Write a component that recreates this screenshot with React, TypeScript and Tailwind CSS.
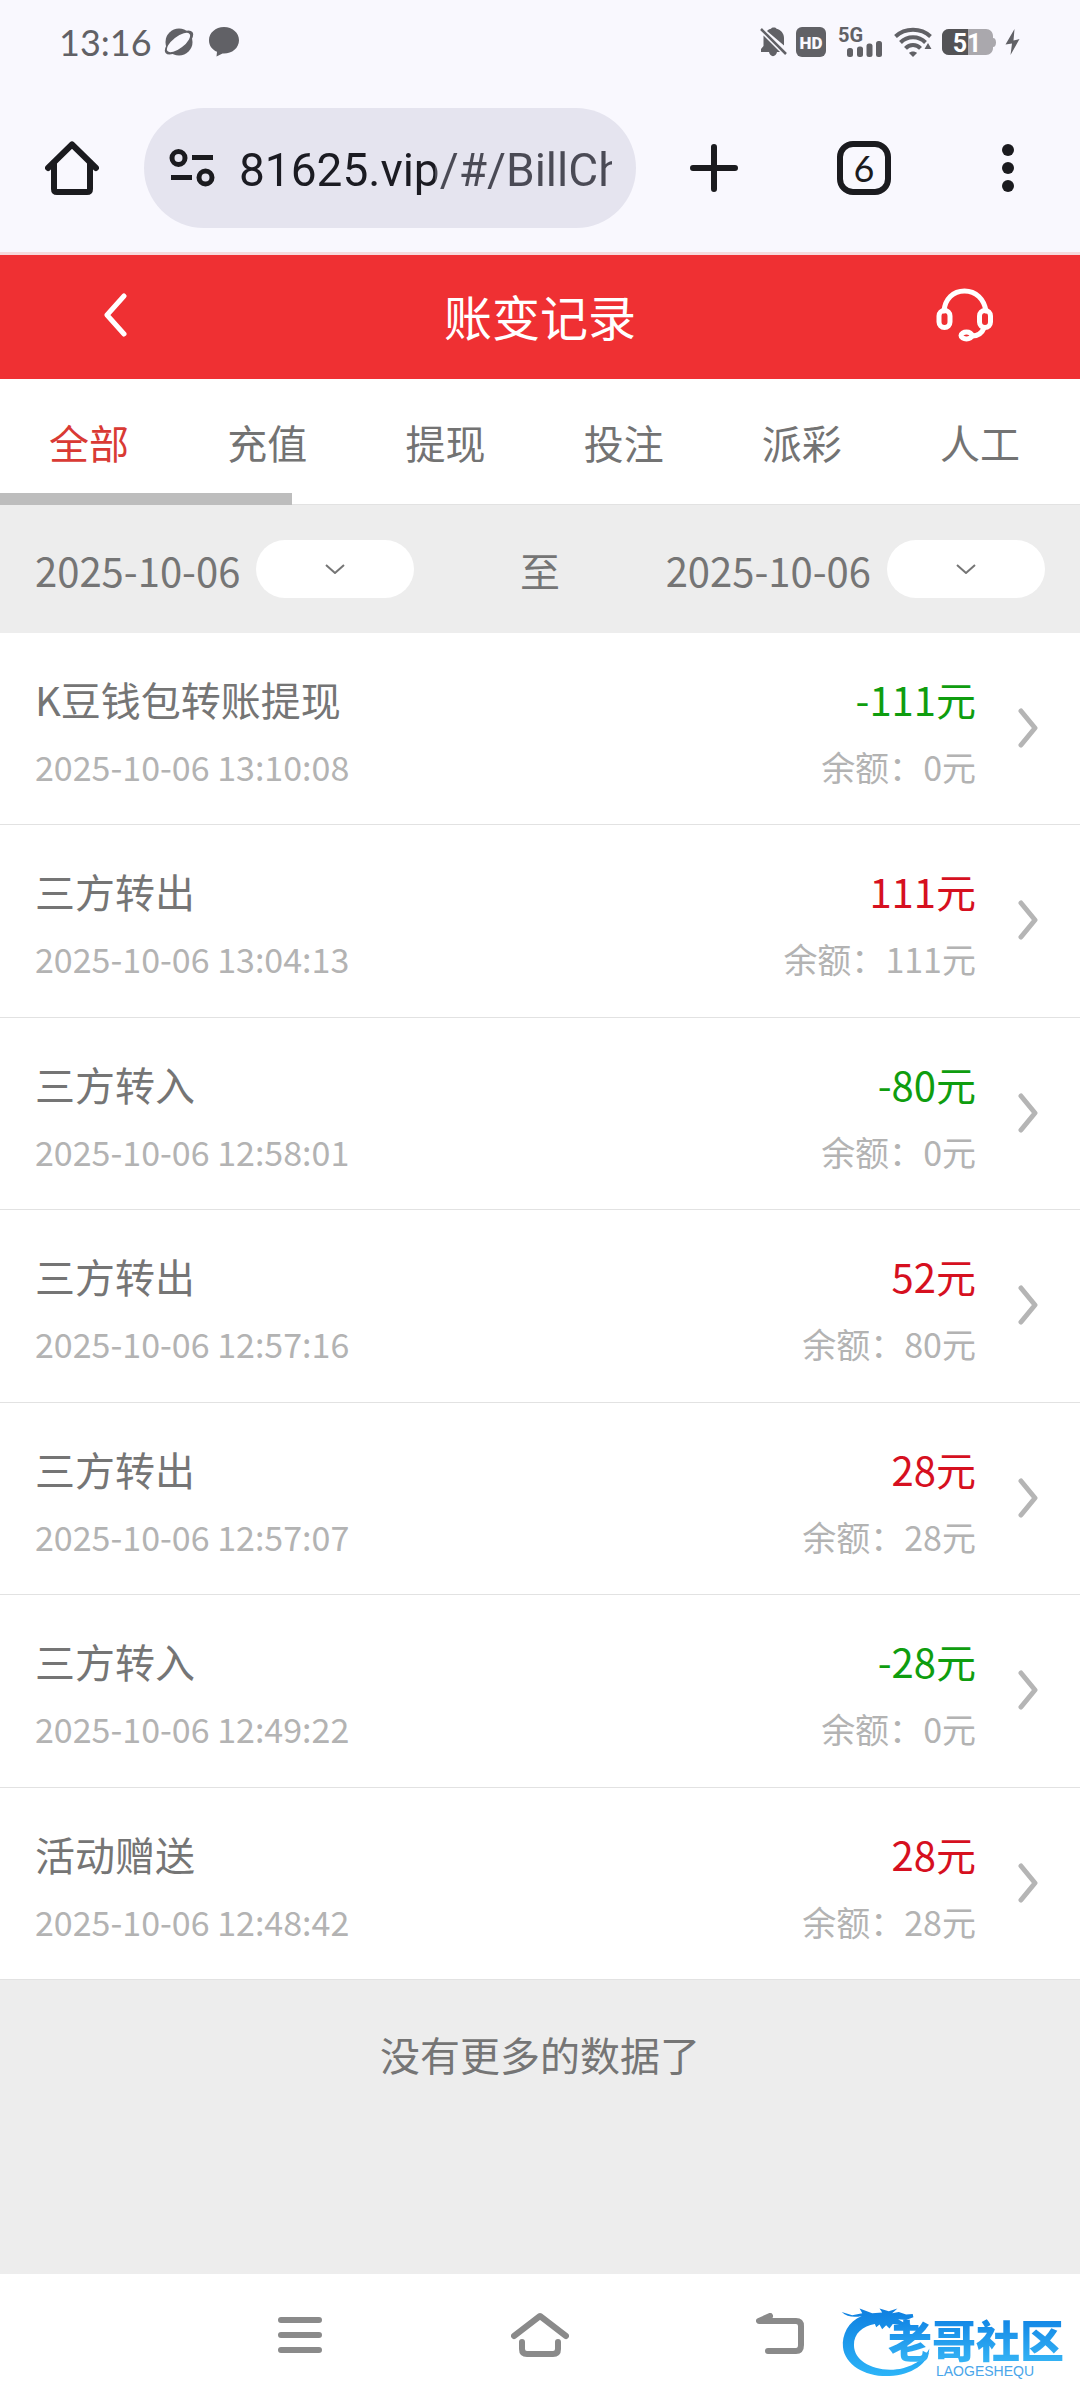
import React from "react";

type Entry = {
  title: string;
  time: string;
  amount: string;
  balance: string;
};

const tabs = ["全部", "充值", "提现", "投注", "派彩", "人工"];

const entries: Entry[] = [
  { title: "K豆钱包转账提现", time: "2025-10-06 13:10:08", amount: "-111", balance: "0" },
  { title: "三方转出", time: "2025-10-06 13:04:13", amount: "111", balance: "111" },
  { title: "三方转入", time: "2025-10-06 12:58:01", amount: "-80", balance: "0" },
  { title: "三方转出", time: "2025-10-06 12:57:16", amount: "52", balance: "80" },
  { title: "三方转出", time: "2025-10-06 12:57:07", amount: "28", balance: "28" },
  { title: "三方转入", time: "2025-10-06 12:49:22", amount: "-28", balance: "0" },
  { title: "活动赠送", time: "2025-10-06 12:48:42", amount: "28", balance: "28" },
];

function StatusBar() {
  return (
    <div className="flex h-[84px] items-center justify-between pr-[60px] pl-[59px] text-[#616166]">
      <div className="flex items-center">
        <span className="font-['Lato',sans-serif] text-[36px] leading-[44px]">13:16</span>
        <svg className="ml-3 h-[30px] w-[30px]" viewBox="0 0 30 30" aria-hidden="true">
          <circle cx="15" cy="15" r="13.500" fill="currentColor" />
          <ellipse cx="15" cy="15.500" rx="17" ry="7.500" transform="rotate(-38 15 15.500)" fill="currentColor" />
          <ellipse cx="14.500" cy="15.500" rx="14" ry="5.800" transform="rotate(-38 14.500 15.500)" fill="#f9f8fe" />
        </svg>
        <svg className="ml-[15px] h-[30px] w-[30px]" viewBox="0 0 30 30" aria-hidden="true">
          <path d="M15 0C23.500 0 30 6 30 13.200C30 21 23 26.500 15 26.500L13.500 26.500L7.500 29.500L8 24.800C3 22.500 0 18.500 0 13.200C0 6 6.500 0 15 0Z" fill="currentColor" />
        </svg>
      </div>
      <div className="flex items-center">
        <svg className="h-[30px] w-[28px]" viewBox="0 0 28 30" aria-hidden="true">
          <path d="M7 4C8.500 2.500 10 2 11 1.800C11.500 0 16 0 16.500 1.800C21 3 24 6.500 24 11V18.500ZM3.500 8.500L20 25H17C16 30.500 10 30.500 9 25H1V22L3.500 19Z" fill="currentColor" />
          <path d="M1 2L26 27" stroke="currentColor" strokeWidth="2.500" />
        </svg>
        <svg className="ml-2 h-[30px] w-[30px]" viewBox="0 0 30 30" aria-hidden="true">
          <rect width="30" height="30" rx="6" fill="currentColor" />
          <text x="15" y="21.500" textAnchor="middle" fill="#f9f8fe" fontFamily="Roboto, sans-serif" fontWeight="900" fontSize="17">HD</text>
        </svg>
        <svg className="ml-3 h-[30px] w-[45px] overflow-visible" viewBox="0 0 45 30" aria-hidden="true">
          <text x="0" y="15" fill="currentColor" fontFamily="Roboto, sans-serif" fontWeight="700" fontSize="20">5G</text>
          <rect x="9" y="21" width="6" height="9" rx="2.500" fill="currentColor" />
          <rect x="19" y="19.500" width="6" height="10.500" rx="2.500" fill="currentColor" />
          <rect x="28.500" y="16.500" width="6" height="13.500" rx="2.500" fill="currentColor" />
          <rect x="38" y="14" width="6" height="16" rx="2.500" fill="currentColor" />
        </svg>
        <svg className="ml-[11px] h-[30px] w-[38px]" viewBox="0 0 38 30" aria-hidden="true">
          <g fill="none" stroke="currentColor" strokeWidth="4">
            <path d="M1.500 9.500C11 0.500 27 0.500 36.500 9.500" />
            <path d="M6.500 15.500C13.500 8.500 24.500 8.500 31.500 15.500" />
            <path d="M11.500 21.300C15.500 17 22.500 17 26.500 21.300" />
          </g>
          <path d="M15 26C17 24 21 24 23 26L19 30Z M34 16L37.500 22H30.500Z" fill="currentColor" />
        </svg>
        <svg className="ml-[10px] h-[28px] w-[54px]" viewBox="0 0 54 28" aria-hidden="true">
          <path d="M7 1H44C48 1 51 4 51 8V10C53 10 54 12 54 14.500S53 19 51 19V20C51 24 48 27 44 27H7C3 27 0 24 0 20V8C0 4 3 1 7 1Z" fill="#aaa8ad" />
          <path d="M7 1H26V27H7C3 27 0 24 0 20V8C0 4 3 1 7 1Z" fill="#535356" />
          <text x="25" y="23.500" textAnchor="middle" fill="#fff" fontFamily="Roboto, sans-serif" fontWeight="700" fontSize="25">51</text>
        </svg>
        <svg className="ml-[9px] h-[28px] w-[15px]" viewBox="0 0 15 28" aria-hidden="true">
          <path d="M9.500 1L0.500 16.500L7 15.500L5.500 27L14.500 11L8.500 12.500Z" fill="currentColor" />
        </svg>
      </div>
    </div>
  );
}

function BrowserBar() {
  return (
    <div className="flex h-[171px] items-start border-b-[3px] border-[#f6d9dc] text-[#1b1b1f]">
      <button type="button" aria-label="主页" className="flex h-[168px] w-36 items-center justify-center">
        <svg className="h-[54px] w-[54px]" viewBox="0 0 54 54" fill="none" stroke="currentColor" strokeWidth="6" strokeLinecap="round" strokeLinejoin="round" aria-hidden="true">
          <path d="M3 27L27 3.500L51 27" />
          <path d="M9 22V48Q9 51 12 51H42Q45 51 45 48V22" />
        </svg>
      </button>
      <div className="mt-6 flex h-[120px] min-w-0 flex-1 items-center rounded-full bg-[#e5e4ef] pr-6 pl-[25px]">
        <svg className="h-[40px] w-[46px] shrink-0" viewBox="0 0 46 40" fill="none" stroke="currentColor" strokeWidth="5" aria-hidden="true">
          <circle cx="9.500" cy="10" r="6.500" />
          <path d="M23 9.500H44M2 29.500H23" />
          <circle cx="36.500" cy="29.500" r="6.500" />
        </svg>
        <input
          aria-label="网址"
          defaultValue="81625.vip/#/BillCh"
          className="ml-6 h-[76px] min-w-0 flex-1 bg-[linear-gradient(90deg,#1b1b22_196px,#4a4a55_196px)] bg-clip-text pt-1 font-['Roboto',sans-serif] text-[46px] text-transparent outline-none"
        />
      </div>
      <button type="button" aria-label="新标签页" className="flex h-[168px] w-[156px] items-center justify-center">
        <svg className="h-12 w-12" viewBox="0 0 48 48" stroke="currentColor" strokeWidth="6" strokeLinecap="round" aria-hidden="true">
          <path d="M24 3V45M3 24H45" />
        </svg>
      </button>
      <button type="button" aria-label="标签页 6" className="flex h-[168px] w-36 items-center justify-center">
        <span className="flex h-[54px] w-[54px] items-center justify-center rounded-2xl border-[6px] border-current font-['Lato',sans-serif] text-[36px] leading-[42px]">
          6
        </span>
      </button>
      <button type="button" aria-label="更多" className="flex h-[168px] w-36 items-center justify-center">
        <svg className="h-12 w-3" viewBox="0 0 12 48" fill="currentColor" aria-hidden="true">
          <circle cx="6" cy="6" r="6" />
          <circle cx="6" cy="24" r="6" />
          <circle cx="6" cy="42" r="6" />
        </svg>
      </button>
    </div>
  );
}

function PageHeader() {
  return (
    <header className="grid h-[124px] grid-cols-[230px_1fr_230px] bg-[#ef3033] pb-1 text-white">
      <button type="button" aria-label="返回" className="flex items-center justify-center">
        <svg className="h-11 w-6" viewBox="0 0 24 44" fill="none" stroke="currentColor" strokeWidth="5" strokeLinecap="round" strokeLinejoin="round" aria-hidden="true">
          <path d="M21 3L4 22L21 41" />
        </svg>
      </button>
      <h1 className="self-center text-center text-[48px] leading-[64px]">账变记录</h1>
      <button type="button" aria-label="客服" className="flex items-center justify-center">
        <svg className="h-[54px] w-[58px]" viewBox="0 0 58 54" fill="none" stroke="currentColor" strokeWidth="5" strokeLinecap="round" aria-hidden="true">
          <path d="M8 23C9 11 17 3 28.500 3S48 11 50 23" />
          <rect x="3" y="22.500" width="11" height="17" rx="5.500" />
          <rect x="43.500" y="22.500" width="11" height="17" rx="5.500" />
          <path d="M48 40C46 45 42 48 36 48" />
          <ellipse cx="30.500" cy="47.500" rx="5.500" ry="3.500" />
        </svg>
      </button>
    </header>
  );
}

function TabStrip() {
  return (
    <nav className="bg-white">
      <div role="tablist" className="flex h-[114px]">
        {tabs.map((tab, i) => (
          <button
            key={tab}
            type="button"
            role="tab"
            aria-selected={i === 0}
            className={
              i === 0
                ? "w-[16.5%] pt-4 pb-1 text-[40px] leading-[60px] text-[#d93a34]"
                : "w-[16.5%] pt-4 pb-1 text-[40px] leading-[60px] text-[#737373]"
            }
          >
            {tab}
          </button>
        ))}
      </div>
      <div className="h-3 border-b border-[#e2e2e2]">
        <div className="h-3 w-[27%] bg-[#bdbdbd]" />
      </div>
    </nav>
  );
}

function DateField({ label, value }: { label: string; value: string }) {
  return (
    <div className="flex items-center gap-4">
      <span className="pt-0.5 text-[40px] leading-[60px]">{value}</span>
      <button type="button" aria-label={label} className="flex h-[58px] w-[158px] items-center justify-center rounded-full bg-white">
        <svg className="h-[10px] w-5" viewBox="0 0 20 10" fill="none" stroke="currentColor" strokeWidth="2" aria-hidden="true">
          <path d="M1 1L10 9L19 1" />
        </svg>
      </button>
    </div>
  );
}

function EntryRow({ entry }: { entry: Entry }) {
  const out = entry.amount.startsWith("-");
  return (
    <li className="border-b border-[#e2e2e2] bg-white even:pb-px">
      <a href="#/BillDetail" className="flex items-center pt-9 pr-[42px] pb-[31px] pl-[35px]">
        <div className="min-w-0 flex-1">
          <p className="text-[40px] leading-[60px] text-[#757575]">{entry.title}</p>
          <p className="mt-3 text-[34px] leading-[52px] text-[#b3b3b3]">{entry.time}</p>
        </div>
        <div className="text-right">
          <p className={out ? "text-[40px] leading-[60px] text-[#0f9d0f]" : "text-[40px] leading-[60px] text-[#d6101f]"}>
            {entry.amount}元
          </p>
          <p className="mt-3 text-[34px] leading-[52px] text-[#b3b3b3]">余额：{entry.balance}元</p>
        </div>
        <svg className="mb-1.5 ml-[42px] h-10 w-5" viewBox="0 0 20 40" fill="none" stroke="#b5b5b5" strokeWidth="5" strokeLinecap="round" strokeLinejoin="round" aria-hidden="true">
          <path d="M3 3L17 20L3 37" />
        </svg>
      </a>
    </li>
  );
}

function Watermark() {
  return (
    <div className="absolute right-4 bottom-5 flex items-start">
      <svg className="h-[77px] w-[93px]" viewBox="60 60 280 230" aria-hidden="true">
        <defs>
          <linearGradient id="dragon" x1="0" y1="0" x2="0" y2="1">
            <stop offset="0" stopColor="#0f7fe0" />
            <stop offset="1" stopColor="#2cb4f8" />
          </linearGradient>
        </defs>
        <path
          d="M128 98C88 115 68 155 72 192C78 246 140 282 212 279C278 276 330 242 332 196C314 234 268 260 214 260C152 258 106 230 105 186C104 150 132 128 168 122L172 132L182 124L190 138L202 126L212 136L222 122L246 126L268 130L276 122L252 116L238 108L262 110L284 102L282 92L262 94L240 86L220 90L236 76L210 84L182 76L190 88L160 90L122 76L130 90L100 96L68 86C84 100 104 104 128 98Z"
          fill="url(#dragon)"
        />
      </svg>
      <div className="-ml-11 pt-3">
        <p className="bg-linear-to-b from-[#0f82e4] to-[#35b4f5] bg-clip-text text-[44px] leading-[48px] font-black text-transparent">老哥社区</p>
        <p className="pl-12 font-['Liberation_Sans',sans-serif] text-[14px] leading-4 text-[#4aa6ea]">LAOGESHEQU</p>
      </div>
    </div>
  );
}

function SystemNav() {
  return (
    <div className="relative flex h-[126px] justify-center bg-white pb-1 text-[#8a8a8a]">
      <button type="button" aria-label="最近任务" className="flex w-60 items-center justify-center">
        <svg className="h-11 w-12" viewBox="0 0 48 44" stroke="currentColor" strokeWidth="6" strokeLinecap="round" aria-hidden="true">
          <path d="M5 7H43M5 22H43M5 37H43" />
        </svg>
      </button>
      <button type="button" aria-label="桌面" className="flex w-60 items-center justify-center">
        <svg className="h-[46px] w-[58px]" viewBox="0 0 58 46" fill="none" stroke="currentColor" strokeWidth="6" strokeLinecap="round" strokeLinejoin="round" aria-hidden="true">
          <path d="M3 24L29 4L55 24" />
          <path d="M11 30V37Q11 42 16 42H42Q47 42 47 37V30" />
        </svg>
      </button>
      <button type="button" aria-label="返回上一页" className="flex w-60 items-center justify-center">
        <svg className="h-11 w-12" viewBox="0 0 48 44" fill="none" stroke="currentColor" strokeWidth="6" strokeLinecap="round" strokeLinejoin="round" aria-hidden="true">
          <path d="M14 3L3 8H40Q45 8 45 13V32Q45 38 40 38H12" />
        </svg>
      </button>
      <Watermark />
    </div>
  );
}

export default function App() {
  return (
    <div className="flex min-h-screen flex-col bg-[#ededed] font-['Noto_Sans_CJK_SC',sans-serif] text-[#757575]">
      <div className="bg-[#f9f8fe]">
        <StatusBar />
        <BrowserBar />
      </div>
      <PageHeader />
      <TabStrip />
      <main className="flex-1">
        <div className="flex h-32 items-center justify-between px-[35px]">
          <DateField label="选择开始日期" value="2025-10-06" />
          <span className="pt-0.5 text-[40px] leading-[60px]">至</span>
          <DateField label="选择结束日期" value="2025-10-06" />
        </div>
        <ul>
          {entries.map((entry) => (
            <EntryRow key={entry.time} entry={entry} />
          ))}
        </ul>
        <p className="py-11 text-center text-[40px] leading-[60px]">没有更多的数据了</p>
      </main>
      <SystemNav />
    </div>
  );
}
